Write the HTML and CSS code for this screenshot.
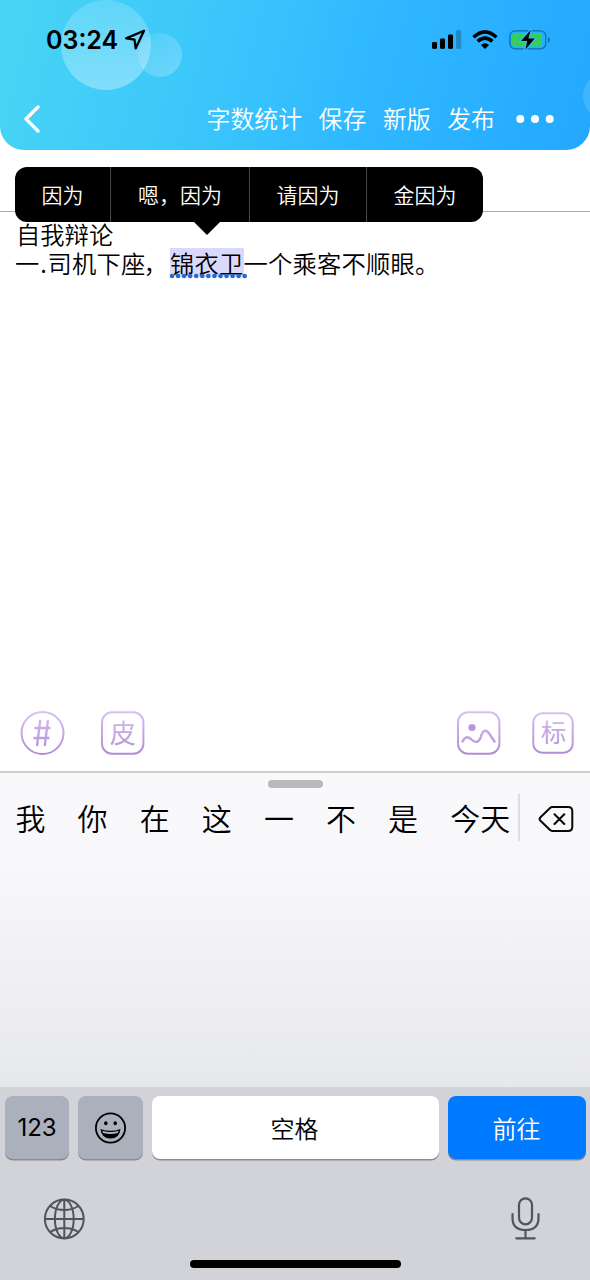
FILE: index.html
```html
<!DOCTYPE html>
<html lang="zh-CN">
<head>
<meta charset="utf-8">
<title>自我辩论</title>
<link rel="stylesheet" href="styles.css">
</head>
<body>
<div class="screen">
  <header class="header">
    <i class="bubble bubble-large"></i>
    <i class="bubble bubble-small"></i>
    <i class="bubble bubble-edge"></i>
    <div class="status">
      <span class="clock">03:24</span>
      <svg class="location" width="22" height="22" viewBox="0 0 22 22" fill="none" stroke="#000" stroke-width="2.3" stroke-linejoin="round"><path d="M20 1.700 2.200 9.400l8.300 1.300 1.200 8.600z"/></svg>
      <svg class="signal" width="30" height="20" viewBox="0 0 30 20"><rect x="0" y="12" width="5" height="7" rx="1.4"/><rect x="8" y="8.5" width="5" height="10.5" rx="1.4"/><rect x="16" y="4.5" width="5" height="14.500" rx="1.4"/><rect x="24" y="0" width="5.200" height="19" rx="1.4" opacity=".22"/></svg>
      <svg class="wifi" width="26" height="20" viewBox="0 0 26 20"><path d="M13 19 8.900 15Q13 11.600 17.100 15z"/><g fill="none" stroke="#000" stroke-width="3.500"><path d="M1.500 7.300Q13-3.600 24.500 7.300"/><path d="M5.600 11.400Q13 4.900 20.400 11.400"/></g></svg>
      <svg class="battery" width="42" height="22" viewBox="0 0 42 22"><rect x=".8" y="1.800" width="36" height="18" rx="5.500" fill="none" stroke="#126ea8" stroke-width="1.300"/><rect x="3" y="4" width="30" height="13.600" rx="3" fill="#34cf5b"/><path d="M39 8v6q2-.8 2-3t-2-3z" fill="#126ea8"/><path d="M21.700.5 11.500 12.300h6.200L15.900 21.200 26.300 9.300h-6.400z" stroke="#31baff" stroke-width="2"/><path d="M21.700.9 12.100 12h6.200l-2 8.800L25.700 9.600h-6.400z"/></svg>
    </div>
    <nav class="nav">
      <svg class="back" width="18" height="30" viewBox="0 0 18 30" fill="none" stroke="#fff" stroke-width="3.300" stroke-linecap="round" stroke-linejoin="round"><path d="M16 3 4 15l12 12"/></svg>
      <div class="actions"><span>字数统计</span><span>保存</span><span>新版</span><span>发布</span></div>
      <svg class="more" width="38" height="10" viewBox="0 0 38 10" fill="#fff"><circle cx="4.300" cy="5" r="4"/><circle cx="19" cy="5" r="4"/><circle cx="33.700" cy="5" r="4"/></svg>
    </nav>
  </header>

  <main class="editor">
    <div class="title-line"></div>
    <div class="text">
      <p>自我辩论</p>
      <p class="sentence">一<span class="point">.</span>司机下座<span class="comma">，</span><span class="marked">锦衣卫<svg class="dots" width="80" height="6" viewBox="0 0 80 6"><path d="M3 3H78" stroke="#246bd1" stroke-width="4.600" stroke-linecap="round" stroke-dasharray="0 6.060"/></svg></span>一个乘客不顺眼。</p>
    </div>
    <div class="popup"><span class="option first">因为</span><span class="option second">嗯，因为</span><span class="option third">请因为</span><span class="option">金因为</span></div>
    <div class="tools">
      <svg width="46" height="46" viewBox="0 0 46 46"><defs><linearGradient id="lilac" gradientUnits="userSpaceOnUse" x1="0" y1="0" x2="0" y2="46"><stop stop-color="#d9c4f2"/><stop offset="1" stop-color="#b188d6"/></linearGradient></defs><g fill="none" stroke="url(#lilac)" stroke-width="2"><circle cx="23.500" cy="23" r="21"/><path d="m21.300 10-3.300 26M29 10l-3.300 26M15.500 18h16M14.500 28h16" stroke-width="2.300"/></g></svg>
      <svg class="skin" width="46" height="46" viewBox="0 0 46 46"><rect x="2" y="2.300" width="41.400" height="41.400" rx="10" fill="none" stroke="url(#lilac)" stroke-width="2"/><text x="22.700" y="32.500" text-anchor="middle" font-size="26" font-weight="400" fill="url(#lilac)">皮</text></svg>
      <svg class="picture" width="46" height="46" viewBox="0 0 46 46"><g fill="none" stroke="url(#lilac)" stroke-width="2"><rect x="2" y="2.300" width="41.400" height="41.400" rx="10"/><path d="M6.500 31.500C9 26.500 12 26 15.500 29.500c4.500 4.500 8 2 9.500-3 1.500-6 5-8 8.500-2.500l5 7.500" stroke-width="2.400" stroke-linecap="round"/></g><circle cx="16" cy="17.500" r="3.600" fill="#b997df"/></svg>
      <svg class="label" width="46" height="46" viewBox="0 0 46 46"><rect x="3.300" y="3.300" width="39.400" height="39.400" rx="9" fill="none" stroke="url(#lilac)" stroke-width="2"/><text x="23.500" y="32" text-anchor="middle" font-size="25.500" font-weight="400" fill="url(#lilac)">标</text></svg>
    </div>
  </main>

  <section class="keyboard">
    <div class="panel">
      <div class="grabber"></div>
      <div class="candidates">
        <span>我</span><span>你</span><span>在</span><span>这</span><span>一</span><span>不</span><span>是</span><span>今天</span>
        <div class="erase"><svg width="38" height="28" viewBox="0 0 38 28" fill="none" stroke="#080808" stroke-width="2" stroke-linecap="round" stroke-linejoin="round"><path d="M14.500 2H30q4.300 0 4.300 4.300v15.400Q34.300 26 30 26H14.500q-1.500 0-2.700-1.200L2.500 15.800Q.7 14 2.500 12.200l9.300-9Q13 2 14.500 2zM16.500 9.200l9.800 9.800M26.300 9.200 16.500 19"/></svg></div>
      </div>
    </div>
    <div class="keys">
      <div class="key dark num">123</div>
      <div class="key dark emoji"><svg width="32" height="32" viewBox="0 0 32 32"><circle cx="15.500" cy="16" r="14.600" fill="none" stroke="#000" stroke-width="1.800"/><ellipse cx="10.800" cy="11.200" rx="1.700" ry="2"/><ellipse cx="20.200" cy="11.200" rx="1.700" ry="2"/><path d="M5.500 17Q15.500 20.700 25.500 17 24.500 26.500 15.500 26.500T5.500 17z"/><path d="M7.400 18.700Q15.500 21.200 23.600 18.700L22.800 21Q15.500 23.200 8.200 21z" fill="#abb0bd"/></svg></div>
      <div class="key space">空格</div>
      <div class="key go">前往</div>
    </div>
    <div class="bottom">
      <svg width="42" height="42" viewBox="0 0 42 42" fill="none" stroke="#50545e" stroke-width="2"><circle cx="21.300" cy="21" r="19.400"/><ellipse cx="21.300" cy="21" rx="9.400" ry="19.300"/><path d="M21.300 1.700v38.600M2 21h38.600M7.300 8q6 4 14 4t14-4M7.300 34q6-4 14-4t14 4"/></svg>
      <svg width="30" height="44" viewBox="0 0 30 44" fill="none" stroke="#50545e" stroke-width="2.200" stroke-linecap="round"><rect x="9" y="1.300" width="13" height="26" rx="6.500"/><path d="M2.500 17v4q0 12 13 12t13-12v-4M15.500 33v8M6.300 41.300h18.400"/></svg>
    </div>
    <div class="home"></div>
  </section>
</div>
</body>
</html>
```
FILE: styles.css
```css
* { box-sizing: border-box; }
body {
  margin: 0;
  background: #fff;
  color: #000;
  font-family: "Noto Sans CJK SC", sans-serif;
  font-weight: 350;
}
p { margin: 0; }
svg { display: block; flex: none; }
.screen {
  width: 590px;
  height: 1280px;
  display: flex;
  flex-direction: column;
  overflow: hidden;
}
.header {
  position: relative;
  height: 150px;
  overflow: hidden;
  border-radius: 0 0 24px 24px;
  background: linear-gradient(104deg, #48d5f4 0%, #3cc7fb 34%, #2fb8ff 62%, #23a8ff 100%);
}
.bubble { position: absolute; border-radius: 50%; }
.bubble-large {
  left: 61px;
  top: 0;
  width: 90px;
  height: 90px;
  background: linear-gradient(170deg, rgba(255,255,255,.14), rgba(255,255,255,.36));
}
.bubble-small {
  left: 138px;
  top: 33px;
  width: 44px;
  height: 44px;
  background: linear-gradient(145deg, rgba(255,255,255,.08), rgba(255,255,255,.26));
}
.bubble-edge {
  left: 583px;
  top: 72px;
  width: 48px;
  height: 48px;
  background: rgba(255,255,255,.13);
}
.status {
  position: relative;
  display: flex;
  align-items: center;
  height: 80px;
  padding-left: 46px;
}
.clock {
  width: 78px;
  font: 600 25px/30px Inter, sans-serif;
  white-space: nowrap;
}
.signal { margin-left: 286px; }
.wifi { margin-left: 10px; }
.battery { margin-left: 11px; }
.nav {
  display: flex;
  align-items: center;
  height: 78px;
  padding-left: 22px;
  color: #fff;
}
.actions {
  display: flex;
  gap: 16.5px;
  margin-left: 166.5px;
  padding-bottom: 2px;
  font-size: 23.9px;
  line-height: 36px;
}
.more { margin-left: 21px; }
.editor {
  position: relative;
  display: flex;
  flex-direction: column;
  height: 621px;
}
.title-line { height: 62px; border-bottom: 1px solid #aaa; }
.text {
  padding: 7px 16px 0;
  font-size: 24.3px;
  line-height: 29px;
  white-space: nowrap;
}
.sentence { margin-left: -1px; letter-spacing: .2px; }
.point { display: inline-block; width: 8px; text-align: center; }
.comma { margin: 0 2px 0 -2px; }
.marked {
  position: relative;
  display: inline-block;
  height: 29px;
  vertical-align: top;
  background: #dad9fb;
}
.dots { position: absolute; left: -1px; bottom: -2px; }
.popup {
  position: absolute;
  left: 15px;
  top: 17px;
  display: flex;
  width: 468px;
  height: 55px;
  border-radius: 12px;
  background: #000;
  color: #fff;
  font-size: 21px;
  line-height: 54px;
  text-align: center;
}
.popup::after {
  content: "";
  position: absolute;
  left: 178px;
  top: 54px;
  border: 14px solid transparent;
  border-top-color: #000;
  border-bottom: 0;
}
.option { flex: 1; }
.option:not(:last-child) { flex: none; border-right: 1px solid #454545; }
.first { width: 96px; }
.second { width: 139px; }
.third { width: 117px; }
.tools { display: flex; margin-top: auto; padding: 0 14px 15px 19px; }
.skin { margin-left: 35px; }
.picture { margin-left: auto; }
.label { margin-left: 28px; }
.keyboard { display: flex; flex: 1; flex-direction: column; background: #d1d3d9; }
.panel {
  height: 316px;
  border-top: 2px solid #cfcfd2;
  background: linear-gradient(#f9f9fc 0%, #f8f8fb 29%, #e7e8eb 100%);
}
.grabber {
  width: 55px;
  height: 8px;
  margin: 7px auto 6px;
  border-radius: 4px;
  background: #b9b9bb;
}
.candidates {
  display: flex;
  gap: 32.100px;
  height: 47px;
  padding-left: 15.500px;
  font-size: 30px;
  line-height: 46px;
}
.candidates span { white-space: nowrap; }
.erase {
  display: flex;
  align-items: center;
  margin-left: -24px;
  padding: 3px 0 0 18px;
  border-left: 2px solid #dedee1;
}
.keys { display: flex; gap: 9px; height: 73px; padding: 9px 4px 0 5px; }
.key {
  display: flex;
  align-items: center;
  justify-content: center;
  height: 63px;
  border-radius: 8px;
  box-shadow: 0 1.500px 0 #898b90;
  font-size: 24px;
}
.dark { width: 64px; background: #abb0bd; }
.emoji { width: 65px; }
.num { font-family: Inter, sans-serif; font-size: 24px; font-weight: 400; }
.space { width: 287px; padding-right: 2px; background: #fff; }
.go { flex: 1; padding-right: 1px; background: #007aff; color: #fff; }
.bottom {
  display: flex;
  justify-content: space-between;
  align-items: center;
  height: 100px;
  padding: 17px 50px 0 43px;
}
.home { width: 211px; height: 8px; margin: 0 auto; border-radius: 4px; background: #000; }
```
